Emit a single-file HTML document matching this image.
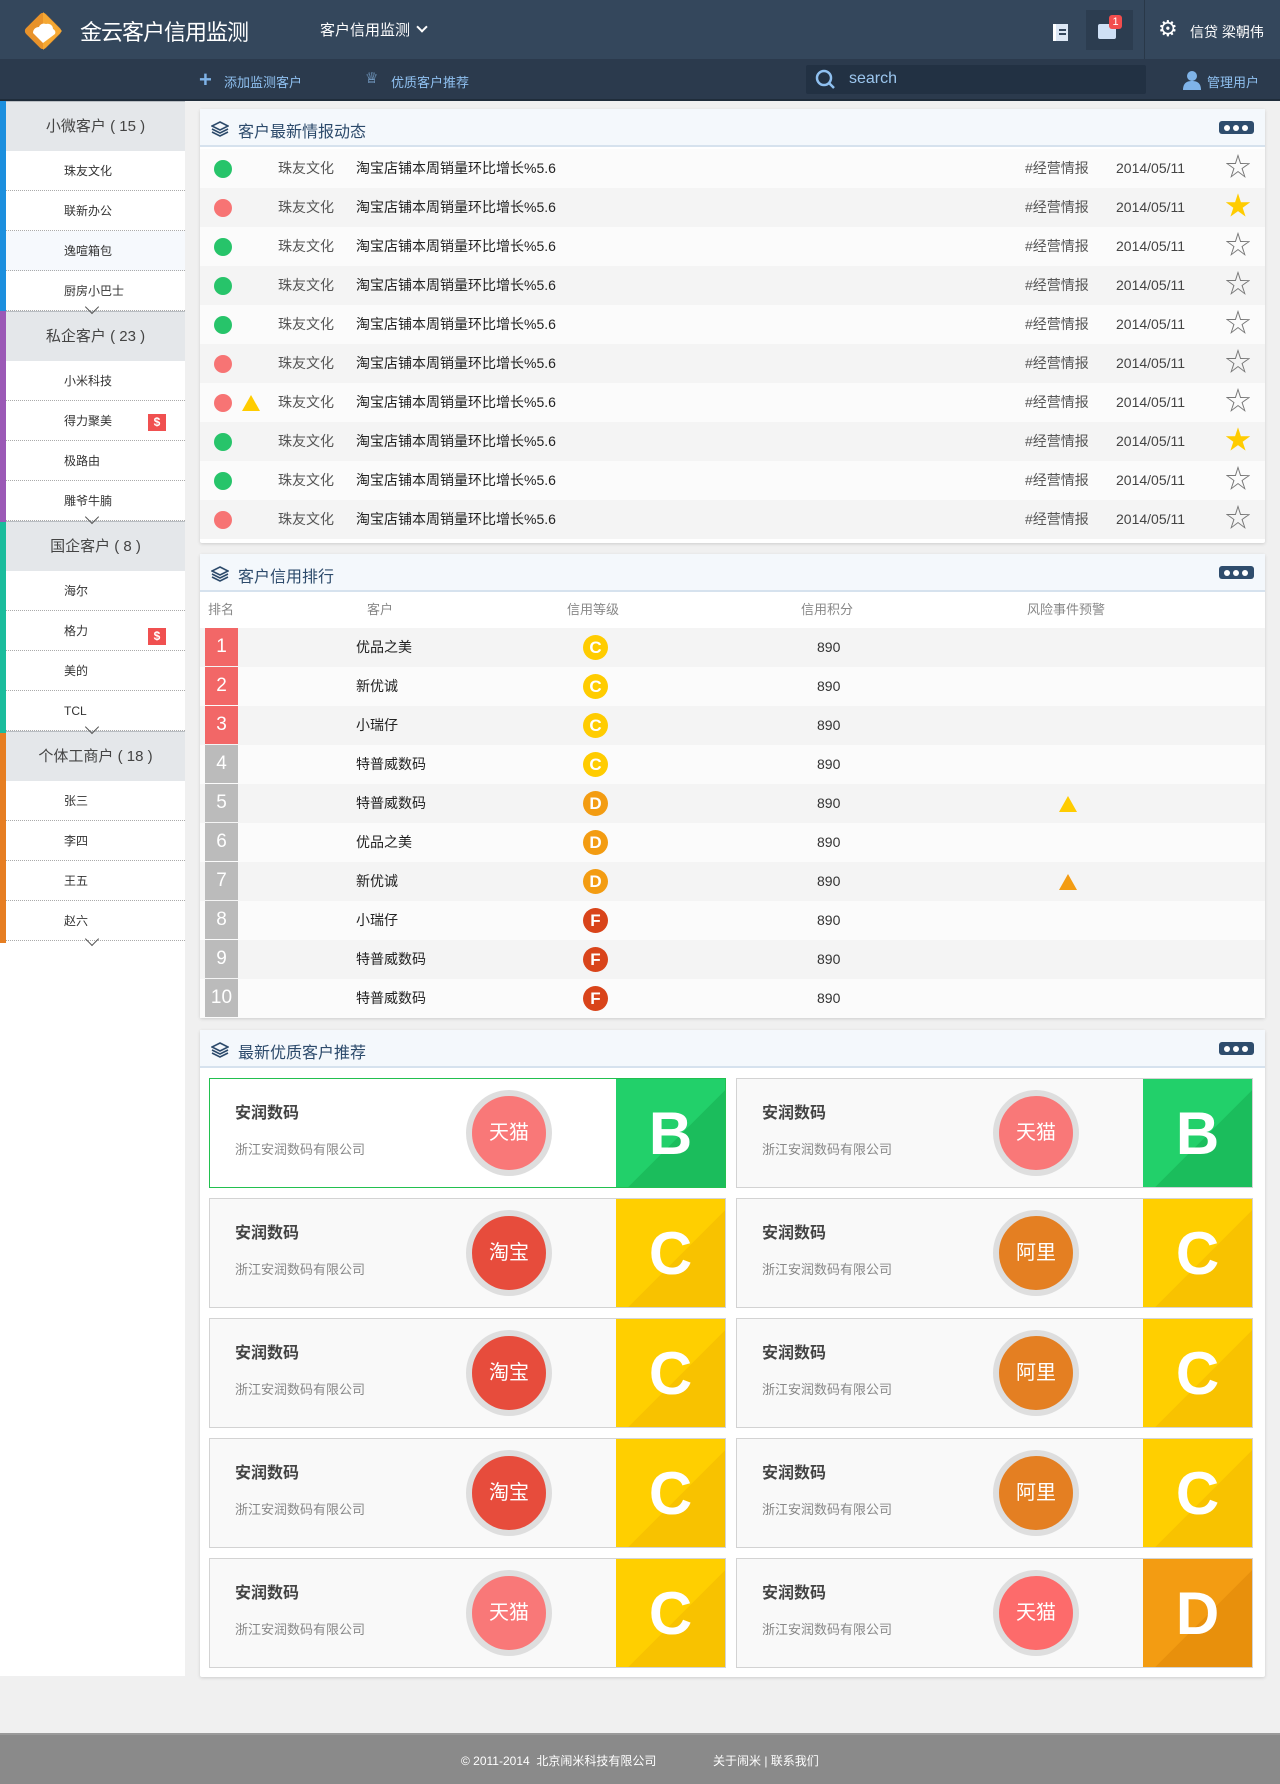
<!DOCTYPE html>
<html><head><meta charset="utf-8">
<style>
*{margin:0;padding:0;box-sizing:border-box}
body{width:1280px;height:1784px;background:#f0f0f0;font-family:"Liberation Sans","Noto Sans CJK SC",sans-serif;position:relative;overflow:hidden;color:#333}
.a{position:absolute}
.top{left:0;top:0;width:1280px;height:59px;background:#34475c}
.nav2{left:0;top:59px;width:1280px;height:42px;background:#2b3a4d;border-bottom:2px solid #1f2c3a}
.wt{color:#fff}
.side{left:0;top:101px;width:185px;height:1575px;background:#fff}
.gh{position:absolute;left:6px;width:179px;height:50px;background:#e4e7ea;font-size:15px;color:#444;text-align:center;line-height:50px;border-top:1px solid #b9bec3}
.it{position:absolute;left:6px;width:179px;height:40px;font-size:12px;color:#333;line-height:40px;padding-left:58px;border-bottom:1px dotted #aaa}
.bar{position:absolute;left:0;width:6px}
.chev{position:absolute;left:87px;width:10px;height:10px;border-right:1.5px solid #555;border-bottom:1.5px solid #555;transform:rotate(45deg)}
.panel{position:absolute;left:200px;width:1065px;background:#fff;box-shadow:0 1px 3px rgba(0,0,0,.15);border-radius:2px}
.ph{height:38px;background:#f4f8fc;border-bottom:2px solid #d6e2ee;position:relative}
.ph span{position:absolute;left:38px;top:9px;font-size:16px;color:#2c4a6b}
.ph svg.ly{position:absolute;left:11px;top:12px}
.more{position:absolute;right:11px;top:12px;width:35px;height:13px;background:#2f4d6d;border-radius:3px}
.more i{position:absolute;top:4px;width:6px;height:6px;border-radius:50%;background:#fff}
.row{position:absolute;left:0;width:1065px;height:39px;font-size:14px;line-height:39px;background:#fbfbfb}
.row:nth-child(even){background:#f4f4f4}
.p2 .row{background:#f4f4f4}
.p2 .row:nth-child(even){background:#fbfbfb}
.dot{position:absolute;left:14px;top:11px;width:18px;height:18px;border-radius:50%}
.g{background:#27c46a}.r{background:#f77474}
.c1{position:absolute;left:78px;color:#555}
.c2{position:absolute;left:156px;color:#222}
.c3{position:absolute;left:825px;color:#555}
.c4{position:absolute;left:916px;color:#444}
.st{position:absolute;left:1025px;top:0;font-size:26px;color:#777;line-height:37px}
.st.y{color:#ffcc00}
.rk{position:absolute;left:5px;top:0;width:33px;height:38px;color:#fff;font-size:19px;line-height:38px;text-align:center;overflow:hidden}
.rr{background:#f26767}.rg{background:#bbb}
.gr{position:absolute;left:383px;top:7px;width:25px;height:25px;border-radius:50%;color:#fff;font-weight:bold;font-size:17px;line-height:25px;text-align:center}
.gC{background:#ffcc00}.gD{background:#f39c12}.gF{background:#d9441a}
.nm{position:absolute;left:156px;font-size:14px;color:#222}
.sc{position:absolute;left:617px;font-size:14px;color:#333}
.tri{position:absolute;width:0;height:0;border-left:9px solid transparent;border-right:9px solid transparent;border-bottom:16px solid #ffcc00}
.card{position:absolute;width:517px;height:110px;background:#f9f9f9;border:1px solid #d3d3d3;overflow:hidden}
.card .n{position:absolute;left:25px;top:20px;font-size:16px;font-weight:bold;color:#444}
.card .co{position:absolute;left:25px;top:60px;font-size:13px;color:#888}
.card .ci{position:absolute;left:256px;top:11px;width:86px;height:86px;border-radius:50%;border:6px solid #dedede;color:#fff;font-size:20px;line-height:74px;text-align:center}
.card .sq{position:absolute;right:0;top:0;width:109px;height:110px;color:#fff;font-size:60px;font-weight:bold;text-align:center;line-height:110px}
.tm{background:#f97878}.tb{background:#e74c3c}.al{background:#e47f22}.tm2{background:#fd6b6b}
.sB{background:linear-gradient(135deg,#22d06a 55%,#1bbd5c 55%)}
.sC{background:linear-gradient(135deg,#ffcf00 55%,#f8c200 55%)}
.sD{background:linear-gradient(135deg,#f39c12 55%,#e8900c 55%)}
</style></head><body>

<div class="a top"></div>
<svg class="a" style="left:20px;top:8px" width="46" height="46" viewBox="0 0 46 46"><rect x="9" y="9" width="28" height="28" rx="4" transform="rotate(45 23 23)" fill="#e8922a"/><path d="M23 4 L42 23 L23 42 Z" fill="#f5a833"/><path d="M13 25c0-4 3-6 6-6 1-3 4-4 7-3 3-1 7 1 7 5 2 1 3 3 2 5l-12 9z" fill="#fff"/></svg>
<div class="a wt" style="left:80px;top:15px;font-size:22px;letter-spacing:-1px">金云客户信用监测</div>
<div class="a wt" style="left:320px;top:19px;font-size:15px">客户信用监测 <span style="display:inline-block;width:8px;height:8px;border-right:2px solid #fff;border-bottom:2px solid #fff;transform:rotate(45deg);margin:0 0 4px 4px"></span></div>
<div class="a" style="left:1053px;top:24px;width:15px;height:17px;background:#dde8f5;border-left:3px solid #fff"><div style="position:absolute;left:3px;top:5px;width:7px;height:2px;background:#34475c"></div><div style="position:absolute;left:3px;top:9px;width:7px;height:2px;background:#34475c"></div></div>
<div class="a" style="left:1086px;top:10px;width:47px;height:40px;background:#2c3d50"></div>
<div class="a" style="left:1098px;top:24px;width:18px;height:15px;background:#cfe0f5;border-radius:2px"></div>
<div class="a" style="left:1109px;top:15px;width:13px;height:14px;background:#f24d4d;border-radius:3px;color:#fff;font-size:11px;text-align:center;line-height:14px">1</div>
<div class="a" style="left:1144px;top:0;width:1px;height:59px;background:#293848"></div>
<div class="a wt" style="left:1158px;top:16px;font-size:22px">⚙</div>
<div class="a wt" style="left:1190px;top:22px;font-size:14px">信贷 梁朝伟</div>

<div class="a nav2"></div>
<div class="a" style="left:199px;top:67px;color:#7fb3e8;font-size:22px;font-weight:bold">+</div>
<div class="a" style="left:224px;top:72px;color:#8fc0f0;font-size:13px">添加监测客户</div>
<div class="a" style="left:365px;top:69px;color:#8fc0f0;font-size:15px">♕</div>
<div class="a" style="left:391px;top:72px;color:#8fc0f0;font-size:13px">优质客户推荐</div>
<div class="a" style="left:806px;top:65px;width:340px;height:29px;background:#223143;border-radius:2px"></div>
<svg class="a" style="left:815px;top:69px" width="22" height="22"><circle cx="9" cy="9" r="7" fill="none" stroke="#8fc0f0" stroke-width="2.5"/><path d="M14 14l5 5" stroke="#8fc0f0" stroke-width="2.5"/></svg>
<div class="a" style="left:849px;top:70px;color:#9cc6ee;font-size:16px">search</div>
<svg class="a" style="left:1183px;top:70px" width="18" height="20"><circle cx="9" cy="6" r="5" fill="#7fb3e8"/><path d="M0 20c0-7 4-9 9-9s9 2 9 9z" fill="#7fb3e8"/></svg>
<div class="a" style="left:1207px;top:72px;color:#8fc0f0;font-size:13px">管理用户</div>

<!-- sidebar -->
<div class="a side"></div>
<div class="bar" style="top:101px;height:210px;background:#1c8fde"></div>
<div class="bar" style="top:311px;height:211px;background:#9b59b6"></div>
<div class="bar" style="top:522px;height:211px;background:#1abc9c"></div>
<div class="bar" style="top:733px;height:210px;background:#e67e22"></div>

<div class="gh" style="top:101px">小微客户 ( 15 )</div>
<div class="it" style="top:151px">珠友文化</div>
<div class="it" style="top:191px">联新办公</div>
<div class="it" style="top:231px;background:#f6f9fd">逸喧箱包</div>
<div class="it" style="top:271px">厨房小巴士</div>
<div class="gh" style="top:311px">私企客户 ( 23 )</div>
<div class="chev" style="top:302px"></div>
<div class="it" style="top:361px">小米科技</div>
<div class="it" style="top:401px">得力聚美</div>
<div class="a" style="left:148px;top:414px;width:18px;height:17px;background:#f05050;color:#fff;font-size:12px;font-weight:bold;text-align:center;line-height:17px">$</div>
<div class="it" style="top:441px">极路由</div>
<div class="it" style="top:481px">雕爷牛腩</div>
<div class="gh" style="top:521px">国企客户 ( 8 )</div>
<div class="chev" style="top:512px"></div>
<div class="it" style="top:571px">海尔</div>
<div class="it" style="top:611px">格力</div>
<div class="a" style="left:148px;top:628px;width:18px;height:17px;background:#f05050;color:#fff;font-size:12px;font-weight:bold;text-align:center;line-height:17px">$</div>
<div class="it" style="top:651px">美的</div>
<div class="it" style="top:691px">TCL</div>
<div class="gh" style="top:731px">个体工商户 ( 18 )</div>
<div class="chev" style="top:722px"></div>
<div class="it" style="top:781px">张三</div>
<div class="it" style="top:821px">李四</div>
<div class="it" style="top:861px">王五</div>
<div class="it" style="top:901px">赵六</div>
<div class="chev" style="top:934px"></div>

<!-- panel 1 -->
<div class="panel" style="top:109px;height:434px">
<div class="ph"><svg class="ly" width="18" height="16" viewBox="0 0 18 16"><path d="M9 1L17 5 9 9 1 5Z M1 8l8 4 8-4 M1 11l8 4 8-4" fill="none" stroke="#2c4a6b" stroke-width="1.6"/></svg><span>客户最新情报动态</span><div class="more"><i style="left:5px"></i><i style="left:14px"></i><i style="left:23px"></i></div></div>
<div style="position:relative;top:2px">
<div class="row" style="top:0"><div class="dot g"></div><span class="c1">珠友文化</span><span class="c2">淘宝店铺本周销量环比增长%5.6</span><span class="c3">#经营情报</span><span class="c4">2014/05/11</span><span class="st">☆</span></div>
<div class="row" style="top:39px"><div class="dot r"></div><span class="c1">珠友文化</span><span class="c2">淘宝店铺本周销量环比增长%5.6</span><span class="c3">#经营情报</span><span class="c4">2014/05/11</span><span class="st y">★</span></div>
<div class="row" style="top:78px"><div class="dot g"></div><span class="c1">珠友文化</span><span class="c2">淘宝店铺本周销量环比增长%5.6</span><span class="c3">#经营情报</span><span class="c4">2014/05/11</span><span class="st">☆</span></div>
<div class="row" style="top:117px"><div class="dot g"></div><span class="c1">珠友文化</span><span class="c2">淘宝店铺本周销量环比增长%5.6</span><span class="c3">#经营情报</span><span class="c4">2014/05/11</span><span class="st">☆</span></div>
<div class="row" style="top:156px"><div class="dot g"></div><span class="c1">珠友文化</span><span class="c2">淘宝店铺本周销量环比增长%5.6</span><span class="c3">#经营情报</span><span class="c4">2014/05/11</span><span class="st">☆</span></div>
<div class="row" style="top:195px"><div class="dot r"></div><span class="c1">珠友文化</span><span class="c2">淘宝店铺本周销量环比增长%5.6</span><span class="c3">#经营情报</span><span class="c4">2014/05/11</span><span class="st">☆</span></div>
<div class="row" style="top:234px"><div class="dot r"></div><div class="tri" style="left:42px;top:12px"></div><span class="c1">珠友文化</span><span class="c2">淘宝店铺本周销量环比增长%5.6</span><span class="c3">#经营情报</span><span class="c4">2014/05/11</span><span class="st">☆</span></div>
<div class="row" style="top:273px"><div class="dot g"></div><span class="c1">珠友文化</span><span class="c2">淘宝店铺本周销量环比增长%5.6</span><span class="c3">#经营情报</span><span class="c4">2014/05/11</span><span class="st y">★</span></div>
<div class="row" style="top:312px"><div class="dot g"></div><span class="c1">珠友文化</span><span class="c2">淘宝店铺本周销量环比增长%5.6</span><span class="c3">#经营情报</span><span class="c4">2014/05/11</span><span class="st">☆</span></div>
<div class="row" style="top:351px"><div class="dot r"></div><span class="c1">珠友文化</span><span class="c2">淘宝店铺本周销量环比增长%5.6</span><span class="c3">#经营情报</span><span class="c4">2014/05/11</span><span class="st">☆</span></div>
</div></div>

<!-- panel 2 -->
<div class="panel p2" style="top:554px;height:464px">
<div class="ph"><svg class="ly" width="18" height="16" viewBox="0 0 18 16"><path d="M9 1L17 5 9 9 1 5Z M1 8l8 4 8-4 M1 11l8 4 8-4" fill="none" stroke="#2c4a6b" stroke-width="1.6"/></svg><span>客户信用排行</span><div class="more"><i style="left:5px"></i><i style="left:14px"></i><i style="left:23px"></i></div></div>
<div style="position:relative;height:36px;font-size:13px;color:#888;line-height:36px">
<span class="a" style="left:8px">排名</span><span class="a" style="left:167px">客户</span><span class="a" style="left:367px">信用等级</span><span class="a" style="left:601px">信用积分</span><span class="a" style="left:827px">风险事件预警</span></div>
<div style="position:relative">
<div class="row" style="top:0"><div class="rk rr">1</div><span class="nm">优品之美</span><div class="gr gC">C</div><span class="sc">890</span></div>
<div class="row" style="top:39px"><div class="rk rr">2</div><span class="nm">新优诚</span><div class="gr gC">C</div><span class="sc">890</span></div>
<div class="row" style="top:78px"><div class="rk rr">3</div><span class="nm">小瑞仔</span><div class="gr gC">C</div><span class="sc">890</span></div>
<div class="row" style="top:117px"><div class="rk rg">4</div><span class="nm">特普威数码</span><div class="gr gC">C</div><span class="sc">890</span></div>
<div class="row" style="top:156px"><div class="rk rg">5</div><span class="nm">特普威数码</span><div class="gr gD">D</div><span class="sc">890</span><div class="tri" style="left:859px;top:12px"></div></div>
<div class="row" style="top:195px"><div class="rk rg">6</div><span class="nm">优品之美</span><div class="gr gD">D</div><span class="sc">890</span></div>
<div class="row" style="top:234px"><div class="rk rg">7</div><span class="nm">新优诚</span><div class="gr gD">D</div><span class="sc">890</span><div class="tri" style="left:859px;top:12px;border-bottom-color:#f39c12"></div></div>
<div class="row" style="top:273px"><div class="rk rg">8</div><span class="nm">小瑞仔</span><div class="gr gF">F</div><span class="sc">890</span></div>
<div class="row" style="top:312px"><div class="rk rg">9</div><span class="nm">特普威数码</span><div class="gr gF">F</div><span class="sc">890</span></div>
<div class="row" style="top:351px"><div class="rk rg">10</div><span class="nm">特普威数码</span><div class="gr gF">F</div><span class="sc">890</span></div>
</div></div>

<!-- panel 3 -->
<div class="panel" style="top:1030px;height:647px">
<div class="ph"><svg class="ly" width="18" height="16" viewBox="0 0 18 16"><path d="M9 1L17 5 9 9 1 5Z M1 8l8 4 8-4 M1 11l8 4 8-4" fill="none" stroke="#2c4a6b" stroke-width="1.6"/></svg><span>最新优质客户推荐</span><div class="more"><i style="left:5px"></i><i style="left:14px"></i><i style="left:23px"></i></div></div>
</div>

<div class="card" style="left:209px;top:1078px;background:#fff;border-color:#22c04f"><div class="n">安润数码</div><div class="co">浙江安润数码有限公司</div><div class="ci tm">天猫</div><div class="sq sB">B</div></div>
<div class="card" style="left:736px;top:1078px"><div class="n">安润数码</div><div class="co">浙江安润数码有限公司</div><div class="ci tm">天猫</div><div class="sq sB">B</div></div>
<div class="card" style="left:209px;top:1198px"><div class="n">安润数码</div><div class="co">浙江安润数码有限公司</div><div class="ci tb">淘宝</div><div class="sq sC">C</div></div>
<div class="card" style="left:736px;top:1198px"><div class="n">安润数码</div><div class="co">浙江安润数码有限公司</div><div class="ci al">阿里</div><div class="sq sC">C</div></div>
<div class="card" style="left:209px;top:1318px"><div class="n">安润数码</div><div class="co">浙江安润数码有限公司</div><div class="ci tb">淘宝</div><div class="sq sC">C</div></div>
<div class="card" style="left:736px;top:1318px"><div class="n">安润数码</div><div class="co">浙江安润数码有限公司</div><div class="ci al">阿里</div><div class="sq sC">C</div></div>
<div class="card" style="left:209px;top:1438px"><div class="n">安润数码</div><div class="co">浙江安润数码有限公司</div><div class="ci tb">淘宝</div><div class="sq sC">C</div></div>
<div class="card" style="left:736px;top:1438px"><div class="n">安润数码</div><div class="co">浙江安润数码有限公司</div><div class="ci al">阿里</div><div class="sq sC">C</div></div>
<div class="card" style="left:209px;top:1558px"><div class="n">安润数码</div><div class="co">浙江安润数码有限公司</div><div class="ci tm">天猫</div><div class="sq sC">C</div></div>
<div class="card" style="left:736px;top:1558px"><div class="n">安润数码</div><div class="co">浙江安润数码有限公司</div><div class="ci tm2">天猫</div><div class="sq sD">D</div></div>

<!-- footer -->
<div class="a" style="left:0;top:1733px;width:1280px;height:51px;background:#8a8a8a;border-top:2px solid #9a9a9a"></div>
<div class="a" style="left:461px;top:1752px;color:#fff;font-size:12px">© 2011-2014 &nbsp;北京闹米科技有限公司</div>
<div class="a" style="left:713px;top:1752px;color:#fff;font-size:12px">关于闹米 | 联系我们</div>
</body></html>
